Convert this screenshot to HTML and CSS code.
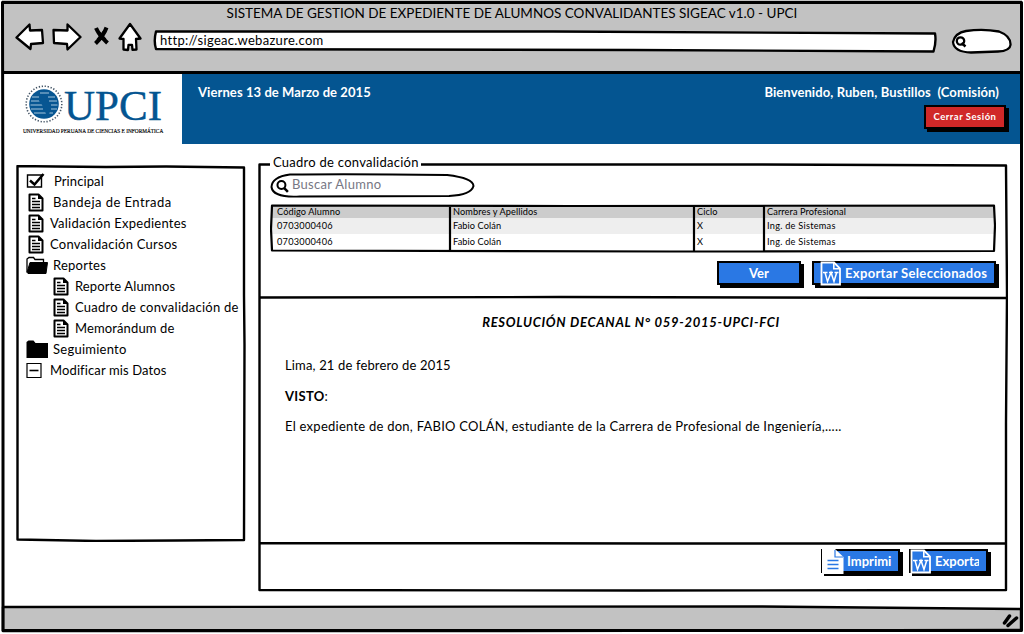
FILE: index.html
```html
<!DOCTYPE html>
<html lang="es">
<head>
<meta charset="utf-8">
<title>SIGEAC v1.0 - UPCI</title>
<link rel="stylesheet" href="styles.css">
</head>
<body>
<svg class="defs" width="0" height="0">
  <symbol id="doc" viewBox="0 0 16 19"><path d="M1.500 1.500h9l4 4v12h-13z" fill="#fff" stroke="#000" stroke-width="2" stroke-linejoin="round"/><path d="M10 1l5 5h-5z" fill="#000"/><path d="M4 5.500h3.500M4 8.500h8M4 11.500h8M4 14.500h8" stroke="#000" stroke-width="1.300"/></symbol>
  <symbol id="word" viewBox="0 0 22 25"><path d="M1.500 1.500h12.500l6 6v16H1.500z" fill="#2a78e4" stroke="#fff" stroke-width="1.800"/><path d="M13.800 1.500v6.200h6.200" fill="none" stroke="#fff" stroke-width="1.600"/><path d="M3 11.500h4.500M9 11.500h4M14.500 11.500h4M5 11.500l2.500 9 3.500-9 3 9 2.700-9" fill="none" stroke="#fff" stroke-width="1.500"/></symbol>
</svg>
<div class="window">
  <header class="chrome">
    <div class="title"><span>SISTEMA DE GESTION DE EXPEDIENTE DE ALUMNOS CONVALIDANTES SIGEAC v1.0 - UPCI</span></div>
    <div class="toolbar">
      <svg class="back" width="30" height="30" viewBox="0 0 30 30"><path d="M1.500 15.500L14.500 2.500l.5 6 12-.5 1 13-12 1-.5 5z"/></svg>
      <svg class="forward" width="30" height="30" viewBox="0 0 30 30"><path d="M1.500 8l14 .5 0-6L28.500 15 15.500 27.500 15 22l-13-1z"/></svg>
      <svg class="stop" width="20" height="30" viewBox="0 0 20 30"><path d="M4 6Q7 13 15.500 21M14.500 5.500Q12 13 3.500 21.500" stroke-width="4"/><path d="M6 10l7 8M13 9l-7 9" stroke-width="3.500"/></svg>
      <svg class="home" width="24" height="30" viewBox="0 0 24 30"><path d="M12 2L22.500 16.500l-4.500.5.500 10.500-4 .3-.5-5-3.500 0-.5 5.200-4.500-.5V17l-4-.5z"/></svg>
      <div class="url"><svg class="frame" viewBox="0 0 784 23"><path d="M3 1.500L400 1.500 782 3.500Q783.500 12 780.500 21.500L480 20 3 19Q.5 11 3 1.500z" fill="#fff"/></svg><span>http://sigeac.webazure.com</span></div>
      <svg class="lookup" width="62" height="27" viewBox="0 0 62 27"><path d="M15 3Q32 .5 48 3.500 60 8 59.500 17 59 23 47 23.500L20 24.500Q3 24 2 14 4 5 15 3z"/><circle cx="9.500" cy="13" r="3.700"/><path d="M10.500 15l4 3.500" stroke-width="2.500"/></svg>
    </div>
  </header>
  <div class="banner">
    <div class="logo">
      <svg class="globe" width="40" height="40" viewBox="0 0 40 40"><circle cx="20" cy="20" r="17.800" fill="none" stroke="#456" stroke-width="1.600" stroke-dasharray="1.300 1.700"/><circle cx="20" cy="20" r="14.800" fill="#075692"/><path d="M8 13h7M7 17h10M6.500 21h12M7 25h12M10 29h12M24 13h7M25 17h8M27 21h6.500M27 25h6M25 29h4M16 9h9" stroke="#b9d2e4" stroke-width=".9"/><path d="M15 10l7 2 1 5 4 5-2 9-3-1-3-8-4-5z" fill="#075692"/></svg>
      <b>UPCI</b>
      <small>UNIVERSIDAD PERUANA DE CIENCIAS E INFORMÁTICA</small>
    </div>
    <div class="date"><span>Viernes 13 de Marzo de 2015</span></div>
    <div class="user"><span class="hello">Bienvenido, Ruben, Bustillos &nbsp;(Comisión)</span>
      <button class="btn logout"><span>Cerrar Sesión</span></button></div>
  </div>
  <div class="content">
    <nav class="menu">
      <svg class="frame" viewBox="0 0 230 377"><path d="M1.500 1L40 1.500 90 2l60-.5 78 1V130l.5 50-.5 195-68 .5-80 .5-78.500-1.500z"/></svg>
      <a><svg width="20" height="19" viewBox="0 0 20 19"><path d="M1.500 3h14v12h-14z" fill="#fff" stroke="#000" stroke-width="1.400"/><path d="M4 8.500l4.500 4L17.500 2" fill="none" stroke="#000" stroke-width="2.500"/></svg><span class="t1">Principal</span></a>
      <a><svg class="d" width="16" height="19"><use href="#doc"/></svg><span class="t2">Bandeja de Entrada</span></a>
      <a><svg class="d" width="16" height="19"><use href="#doc"/></svg><span class="t3">Validación Expedientes</span></a>
      <a><svg class="d" width="16" height="19"><use href="#doc"/></svg><span class="t4">Convalidación Cursos</span></a>
      <a><svg width="23" height="19" viewBox="0 0 23 19"><path d="M1 16V3l2-1.500h4.500L9 3.500h8.500V6" fill="#fff" stroke="#000" stroke-width="1.300"/><path d="M1 16.500L4 6.500h17.500l-1.500 11H2z" stroke="#000"/></svg><span class="t5">Reportes</span></a>
      <a class="sub"><svg class="d" width="16" height="19"><use href="#doc"/></svg><span class="t6">Reporte Alumnos</span></a>
      <a class="sub"><svg class="d" width="16" height="19"><use href="#doc"/></svg><span class="t7">Cuadro de convalidación de</span></a>
      <a class="sub"><svg class="d" width="16" height="19"><use href="#doc"/></svg><span class="t8">Memorándum de</span></a>
      <a><svg width="23" height="19" viewBox="0 0 23 19"><path d="M.5 18V2l2-1.500h5l2 2.500h12.500v15z"/></svg><span class="t9">Seguimiento</span></a>
      <a><svg width="16" height="19" viewBox="0 0 16 19"><path d="M1 2.500h14v14H1z" fill="#fff" stroke="#000" stroke-width="1.200"/><path d="M3.500 9.500h9" stroke="#000" stroke-width="1.600"/></svg><span class="t10">Modificar mis Datos</span></a>
    </nav>
    <main class="panel">
      <svg class="frame" viewBox="0 0 750 429"><path d="M12 1.500H1.500V427l380 .5 366.500-.5L748 260 749 130 748 2.500 500 1.500H163M2 134.500l300-.5 446 1M2 380l400 .5h346"/></svg>
      <section class="records">
        <h2><span>Cuadro de convalidación</span></h2>
        <div class="search"><svg class="frame" viewBox="0 0 206 25"><path d="M20 1.500Q80 .5 178 2 204 5 204.500 13 202 22 180 23L30 23.500Q3 25 1.500 14 2 4 20 1.500z" fill="#fff" stroke-width="2"/><circle cx="11.500" cy="12" r="4" stroke-width="2"/><path d="M14 15l4 4" stroke-width="2.500"/></svg><span>Buscar Alumno</span></div>
        <div class="table">
          <svg class="frame" viewBox="0 0 726 49"><path d="M2 1.500L300 2l424-.5 1 20-1 25.500L400 47.500 2 46.500 1 25zM180 2v45M424 2v45M494 2v45" stroke-width="2.200"/></svg>
          <div class="row head"><span>Código Alumno</span><span>Nombres y Apellidos</span><span>Ciclo</span><span>Carrera Profesional</span></div>
          <div class="row odd"><span class="num">0703000406</span><span>Fabio Colán</span><span>X</span><span class="wide">Ing. de Sistemas</span></div>
          <div class="row"><span class="num">0703000406</span><span>Fabio Colán</span><span>X</span><span class="wide">Ing. de Sistemas</span></div>
        </div>
        <div class="actions"><button class="btn ver"><span>Ver</span></button><button class="btn export"><svg width="22" height="25"><use href="#word"/></svg><span>Exportar Seleccionados</span></button></div>
      </section>
      <article class="document">
        <h1><span>RESOLUCIÓN DECANAL N° 059-2015-UPCI-FCI</span></h1>
        <p><span class="place">Lima, 21 de febrero de 2015</span></p>
        <p><span class="visto"><b>VISTO</b>:</span></p>
        <p><span class="body">El expediente de don, FABIO COLÁN, estudiante de la Carrera de Profesional de Ingeniería,.....</span></p>
      </article>
      <div class="actions bottom">
        <button class="btn print"><svg width="22" height="25" viewBox="0 0 22 25"><path d="M0 0h13l8.500 8v17H0z" fill="#fff"/><path d="M13 1v7h8" fill="none" stroke="#2a78e4" stroke-width="1.200"/><path d="M5.500 11.500h11M5.500 15.500h11M5.500 19.500h11" stroke="#2a78e4" stroke-width="1.400"/></svg><span>Imprimi</span></button>
        <button class="btn save"><svg width="22" height="25"><use href="#word"/></svg><span class="clip">Exporta</span></button>
      </div>
    </main>
  </div>
  <footer class="status"><svg class="frame" viewBox="0 0 1024 30"><path d="M3 3L760 2.500 1021 5V26L500 27 3 27z" fill="#c2c2c2"/><path d="M1004.500 19l5-7M1008 21.500l8.500-7.500" stroke-width="3.500" stroke-linecap="round"/></svg></footer>
  <svg class="frame edge" viewBox="0 0 1024 634"><path d="M2.500 2.500H1021.500V630.500H3V300z"/></svg>
</div>
</body>
</html>
```
FILE: styles.css
```css
* { box-sizing: border-box; }
body { margin: 0; background: #fff; color: #000; font: 13px/21px Lato, "Liberation Sans", sans-serif; }
.defs { position: absolute; }
.window { position: relative; width: 1024px; height: 634px; display: flex; flex-direction: column; overflow: hidden; }
.frame { position: absolute; inset: 0; width: 100%; height: 100%; fill: none; stroke: #000; stroke-width: 2.4; stroke-linejoin: round; pointer-events: none; }
.edge { stroke-width: 3; }
span { white-space: pre; }

.chrome { height: 74px; flex: none; background: #c2c2c2; border-bottom: 3px solid #000; margin: 0 2px; padding-top: 3px; }
.title { text-align: center; height: 19px; line-height: 20px; font-size: 13.500px; }
.toolbar { display: flex; padding-left: 13px; height: 32px; }
.toolbar > svg { fill: #fff; stroke: #000; stroke-width: 2.300; stroke-linejoin: round; flex: none; }
.forward { margin-left: 7px; }
.stop { margin-left: 10px; }
.home { margin-left: 6px; }
.url { position: relative; width: 784px; height: 23px; margin: 8px 0 0 11px; flex: none; padding-left: 7px; line-height: 21px; letter-spacing: .31px; }
.url > span { position: relative; }
.lookup { margin: 6px 0 0 14px; }

.banner { height: 70px; flex: none; background: #045591; display: flex; margin: 0 3px; color: #fff; }
.logo { background: #fff; width: 179px; color: #045591; display: grid; grid-template-columns: 41px 100px; grid-template-rows: 45px 10px; padding: 8px 0 0 20px; }
.globe { margin: 2px 0 0 1px; }
.logo b { font: 43px/48px "Liberation Serif", serif; -webkit-text-stroke: .4px #045591; }
.logo small { grid-column: 1 / 3; font: 5.350px/8px "Liberation Serif", serif; color: #000; white-space: nowrap; -webkit-text-stroke: .15px #000; }
.date { padding: 8px 0 0 16px; flex: 1; font-weight: 700; letter-spacing: .08px; }
.user { padding: 8px 15px 0 0; display: flex; flex-direction: column; align-items: flex-end; font-weight: 700; }
.hello { margin-right: 7px; letter-spacing: .1px; }

.btn { font: 700 13px/20px Lato, sans-serif; color: #fff; background: #2a78e4; border: 2.500px solid #000; box-shadow: 3px 3px 0 #000; padding: 0; display: flex; align-items: center; justify-content: center; height: 24px; }
.logout { background: #d02828; width: 82px; height: 24px; margin: 2px 0 0; font-size: 9.500px; letter-spacing: .5px; }

.content { display: flex; flex: 1; padding: 19px 16px 0; align-items: flex-start; }
.menu { position: relative; width: 230px; height: 377px; margin-top: 2px; padding: 6px 0 0 10px; flex: none; letter-spacing: .25px; }
.menu a { display: flex; height: 21px; align-items: center; }
.menu svg:not(.frame) { flex: none; }
.menu .d { margin-left: 2px; margin-right: -1px; }
.menu a.sub { padding-left: 25px; }
.t1 { margin-left: 8px; letter-spacing: .1px; } .t2 { margin-left: 10px; letter-spacing: .45px; } .t3, .t4 { margin-left: 7px; }
.t5, .t9 { margin-left: 4px; } .t6, .t7, .t8 { margin-left: 7px; } .t10 { margin-left: 8px; letter-spacing: .12px; }
.t6, .t8 { letter-spacing: .12px; }

.panel { position: relative; width: 750px; height: 429px; margin-left: 12px; flex: none; }
.records { height: 135px; padding-left: 12px; }
h2 { margin: 0 0 0 3px; font-size: 13px; line-height: 21px; font-weight: 400; height: 11px; position: relative; top: -11px; letter-spacing: .26px; }
.search { position: relative; width: 205px; height: 25px; padding-left: 22px; line-height: 22px; color: #777784; letter-spacing: .3px; margin-top: -1px; }
.search > span { position: relative; }
.table { position: relative; width: 726px; height: 49px; margin-top: 6px; padding: 2px 2px 0; font-size: 9.200px; letter-spacing: .1px; }
.row { display: grid; grid-template-columns: 176px 244px 70px 1fr; height: 16px; line-height: 16px; padding-left: 5px; }
.row.head { background: #ccc; height: 12px; line-height: 12px; }
.row.odd { background: #eee; }
.num, .wide { letter-spacing: .25px; }
.actions { display: flex; padding-right: 12px; justify-content: flex-end; margin-top: 8px; gap: 11px; }
.ver { width: 84px; }
.export { width: 184px; gap: 4px; letter-spacing: .33px; justify-content: flex-start; padding-left: 6px; }
.export > span { margin-left: -1px; }
.btn svg { flex: none; }
.document { height: 246px; padding: 14px 0 0 27px; }
h1 { margin: 0 31px 22px 0; font: italic 700 13px/21px Lato, sans-serif; letter-spacing: .72px; text-align: center; }
.document p { margin: 0 0 9.500px; }
.place { letter-spacing: .15px; } .visto { letter-spacing: .3px; } .body { letter-spacing: .25px; }
.bottom { margin-top: 5px; padding-right: 20px; gap: 9px; }
.print, .save { width: 79px; justify-content: flex-start; gap: 3px; }
.print svg, .save svg { margin-left: -1px; }
.clip { width: 44px; overflow: hidden; text-align: left; }
.status { position: relative; height: 30px; flex: none; }
```
